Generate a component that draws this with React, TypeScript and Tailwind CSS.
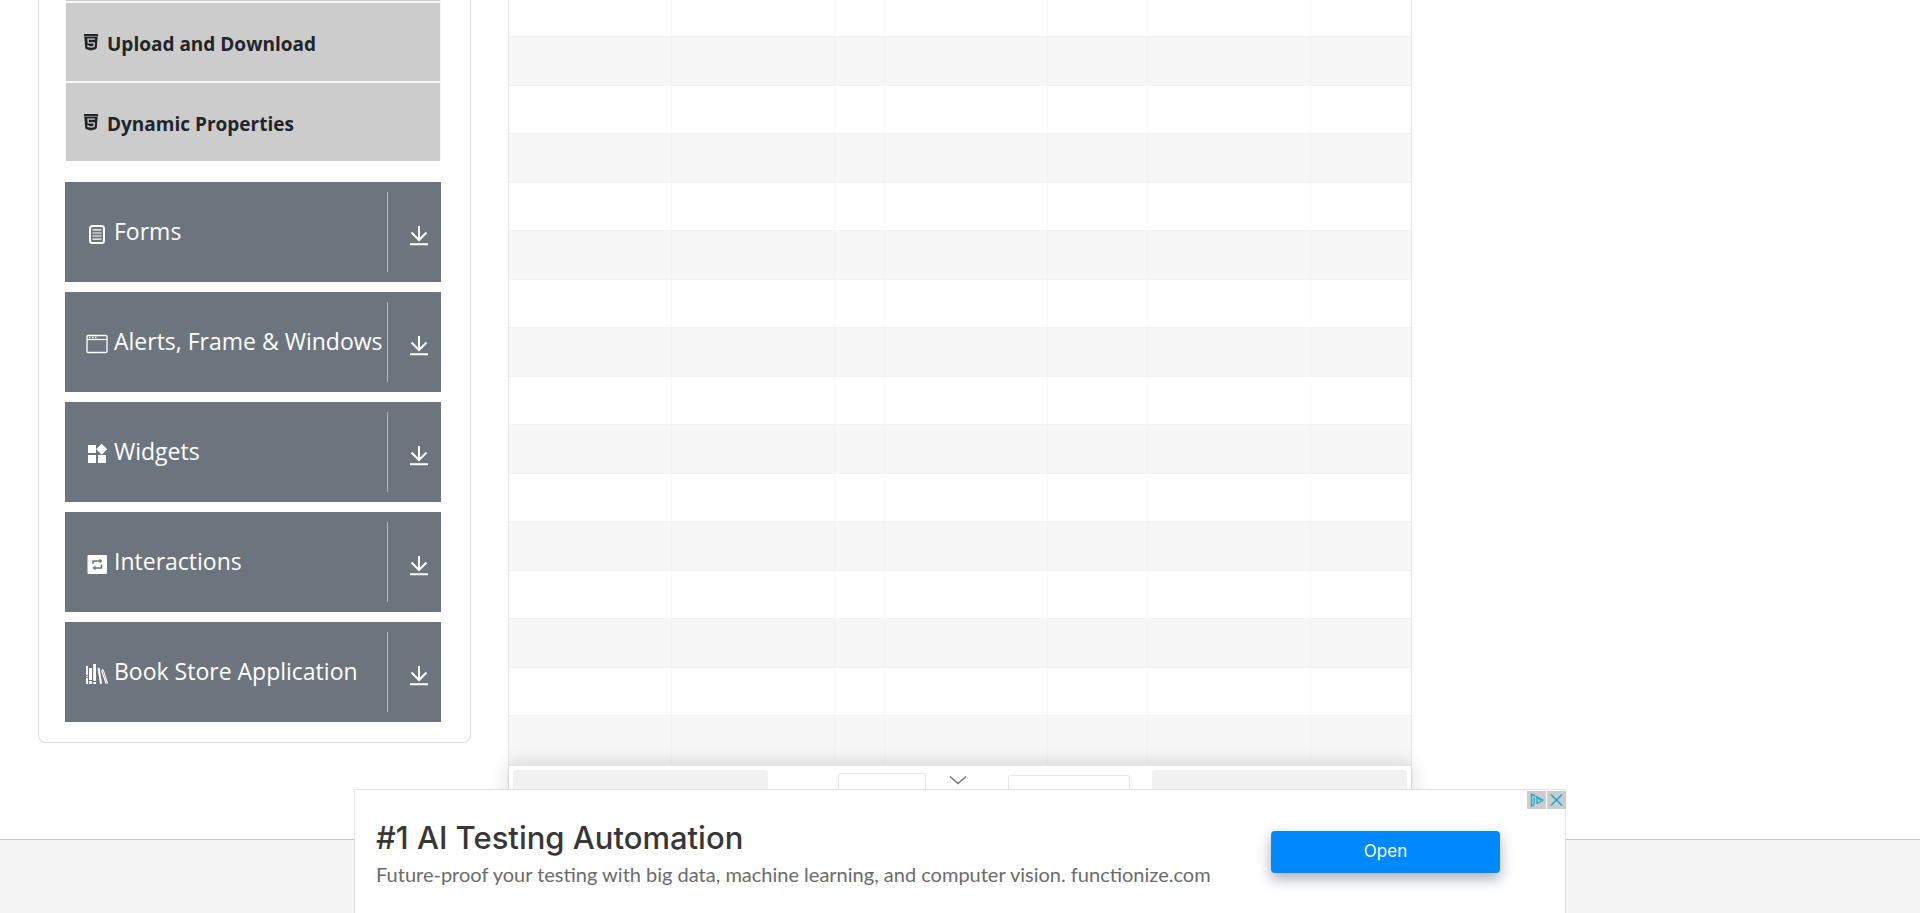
import React from 'react';

const HtmlIcon = () => (
  <svg viewBox="0 0 14 17" className="h-[17px] w-[14px] shrink-0" aria-hidden="true">
    <path fill="#212529" d="M0 0h14v2.4h-.3l-.9 11.4c-.1.8-.6 1.3-1.3 1.5L7 16.4l-4.500-1.100c-.7-.2-1.200-.7-1.300-1.500L.3 2.400H0z" />
    <path fill="none" stroke="#ccc" strokeWidth="1.3" d="M10.800 5.200H4l.3 3.700h6l-.3 3.500-3 .8-3-.8-.1-1.400" />
    <path fill="none" stroke="#ccc" strokeWidth=".6" d="M.5 2.400h13" />
  </svg>
);

const FormsIcon = () => (
  <svg viewBox="0 0 22 22" className="size-[22px]" aria-hidden="true" fill="none" stroke="#fff">
    <rect x="4" y="4" width="14" height="17" rx="2.500" strokeWidth="2" />
    <path strokeWidth="1.200" d="M6.500 7.900h9M6.500 11h9M6.500 14h9M6.500 17.100h9" />
  </svg>
);

const WindowIcon = () => (
  <svg viewBox="0 0 22 22" className="size-[22px]" aria-hidden="true" fill="none" stroke="#fff">
    <rect x="1" y="3.500" width="20" height="17" rx="1" strokeWidth="1.300" />
    <path strokeWidth="1.200" d="M1 7.500h20" />
    <path strokeWidth="1.500" d="M3 5.500h1.500M6 5.500h1.500M9 5.500h1.500" />
  </svg>
);

const WidgetsIcon = () => (
  <svg viewBox="0 0 22 22" className="size-[22px]" aria-hidden="true" fill="#fff">
    <path d="M2 3h8v8H2zM2 13h8v8H2zM12 13h8v8h-8zM15.700 1.800l5.500 5.500-5.500 5.500-5.500-5.500z" />
  </svg>
);

const InteractionsIcon = () => (
  <svg viewBox="0 0 22 22" className="size-[22px]" aria-hidden="true">
    <rect x="1.500" y="3" width="19.500" height="19" rx="1" fill="#fff" />
    <g fill="none" stroke="#6c757d" strokeWidth="1.500">
      <path d="M7 12V9h8M15.500 12.500v3.500H8" />
    </g>
    <path fill="#6c757d" d="M13.500 6.500l3 2.500-3 2.500zM9.500 13.500l-3 2.500 3 2.500z" />
  </svg>
);

const BooksIcon = () => (
  <svg viewBox="0 0 22 22" className="size-[22px]" aria-hidden="true" fill="#fff">
    <path d="M0 4h2v9H0zM0 14h2v1H0zM0 16h2v6H0zM3 6h3v12H3zM3 19h3v3H3zM7.200 2h2.800v17H7.200zM7.200 20h2.800v2H7.200z" />
    <path d="M11.500 6l2-.4L16 21.500l-2 .5z" />
    <path fill="none" stroke="#fff" strokeWidth="1.100" d="M15.500 8.500l4.700 13.200M17.200 7.800l4.400 13.700M15.500 8.500l1.700-.7" />
  </svg>
);

const DownloadIcon = () => (
  <svg viewBox="0 0 18 20" className="h-5 w-[18px]" aria-hidden="true" fill="none" stroke="#fff" strokeWidth="2">
    <path d="M9 0v13.500M1.500 6.500L9 14l7.500-7.500M0 18.200h18" />
  </svg>
);

const items = ['Upload and Download', 'Dynamic Properties'];

const groups = [
  { label: 'Forms', Icon: FormsIcon },
  { label: 'Alerts, Frame & Windows', Icon: WindowIcon },
  { label: 'Widgets', Icon: WidgetsIcon },
  { label: 'Interactions', Icon: InteractionsIcon },
  { label: 'Book Store Application', Icon: BooksIcon },
];

const columns = ['w-[163px]', 'w-[163px]', 'w-[50px]', 'w-[163px]', 'w-[100px]', 'w-[163px]', 'w-[100px]'];
const rows = Array.from({ length: 16 }, (_, i) => i);

function Sidebar() {
  return (
    <nav className="self-start rounded-b-lg border border-t-0 border-[#dcdcdc] pr-[29px] pb-5 pl-[26px]">
      <ul>
        <li className="h-[2px] border border-t-0 border-[#f8f8f8] bg-[#ccc]" />
        {items.map((item) => (
          <li key={item} className="h-20 border border-[#f8f8f8] bg-[#ccc]">
            <a href="#" className="flex h-full items-center gap-[9px] pl-[18px] text-[19px] font-bold text-[#212529]">
              <HtmlIcon />
              <span className="pt-1">{item}</span>
            </a>
          </li>
        ))}
      </ul>
      <div className="mt-5 flex flex-col gap-[10px]">
        {groups.map(({ label, Icon }) => (
          <button
            key={label}
            type="button"
            className="flex h-[100px] w-full items-center bg-[#6c757d] pl-[21px] text-left text-[23px] text-white"
          >
            <span className="pt-[2px]">
              <Icon />
            </span>
            <span className="flex-1 whitespace-nowrap pb-[2px] pl-[6px]">{label}</span>
            <span className="flex h-20 w-[54px] shrink-0 items-center justify-center border-l border-[#b8b8b8] pl-2 pt-[8px]">
              <DownloadIcon />
            </span>
          </button>
        ))}
      </div>
    </nav>
  );
}

function DataTable() {
  return (
    <section className="border-x border-[#e5e5e5]">
      <table className="w-full table-fixed border-separate border-spacing-0">
        <colgroup>
          {columns.map((width, i) => (
            <col key={i} className={width} />
          ))}
        </colgroup>
        <tbody>
          {rows.map((row) => (
            <tr key={row} className="odd:bg-white even:bg-[#f7f7f7]">
              {columns.map((_, i) => (
                <td
                  key={i}
                  className={`border-b border-r border-b-[#f2f2f2] border-r-black/[0.02] p-0 last:border-r-0 ${
                    row === 0 ? 'h-[37px]' : row === 15 ? 'h-[48px] border-b-0' : row % 2 ? 'h-[49px]' : 'h-[48px]'
                  }`}
                />
              ))}
            </tr>
          ))}
        </tbody>
      </table>
      <div className="relative grid h-12 grid-cols-[255fr_384fr_255fr] border-t-2 border-[#e5e5e5] bg-white p-1 shadow-[0_0_20px_rgba(0,0,0,0.16)]">
        <button type="button" disabled aria-label="Previous" className="rounded-[3px] bg-[#f1f1f1]" />
        <div className="flex items-start justify-between pl-[70px] pr-[22px]">
          <input
            type="number"
            aria-label="Page"
            className="mt-[3px] h-9 w-[88px] rounded-[3px] border border-black/10 bg-white"
          />
          <select
            aria-label="Rows per page"
            className="mt-[5px] h-8 w-[122px] appearance-none rounded-[3px] border border-black/10 bg-white"
          />
        </div>
        <button type="button" disabled aria-label="Next" className="rounded-[3px] bg-[#f1f1f1]" />
      </div>
    </section>
  );
}

function AdBanner() {
  return (
    <aside className="fixed bottom-0 left-1/2 z-20 flex h-[124px] w-[1212px] max-w-full -translate-x-1/2 items-start justify-between border border-b-0 border-[#e3e3e3] bg-white pl-[21px] pr-[65px] font-['Inter','Open_Sans',sans-serif]">
      <button type="button" aria-label="Collapse" className="absolute -top-[15px] left-[594px]">
        <svg viewBox="0 0 18 10" className="h-[10px] w-[18px]" fill="none" stroke="#757575" strokeWidth="1.500">
          <path d="M1 1.500l8 7 8-7" />
        </svg>
      </button>
      <div className="pt-7">
        <h2 className="text-[31px] leading-10 font-medium text-[#373737]">#1 AI Testing Automation</h2>
        <p className="font-['Lato',sans-serif] text-[20px] leading-8 text-[#6b6b6b]">
          Future-proof your testing with big data, machine learning, and computer vision. functionize.com
        </p>
      </div>
      <a
        href="#"
        className="mt-[41px] flex h-[42px] w-[229px] items-center justify-center rounded-[4px] bg-[#0088ff] text-[17px] text-white shadow-[0_6px_14px_rgba(40,50,80,0.4)]"
      >
        Open
      </a>
      <div className="absolute top-px -right-px flex gap-px">
        <button type="button" aria-label="Ad choices" className="flex h-[18px] w-[19px] items-center justify-center bg-[#ccc]">
          <svg viewBox="0 0 19 18" className="h-[18px] w-[19px]" fill="none" stroke="#1eaecb" strokeWidth="1.400" strokeLinejoin="round">
            <path d="M7 14l-2.500 1.200V3L16 9.200 10 12.500V6.500l4 2.500M7.200 6.500v7" />
          </svg>
        </button>
        <button type="button" aria-label="Close ad" className="flex h-[18px] w-[19px] items-center justify-center bg-[#ccc]">
          <svg viewBox="0 0 19 18" className="h-[18px] w-[19px]" fill="none" stroke="#1eaecb" strokeWidth="1.700">
            <path d="M4 3.500l11 11M15 3.500l-11 11" />
          </svg>
        </button>
      </div>
    </aside>
  );
}

export default function App() {
  return (
    <div className="flex min-h-screen flex-col bg-white font-['Open_Sans','Noto_Sans',sans-serif]">
      <main className="grid grid-cols-[433fr_904fr_433fr] gap-x-[37px] px-[38px] pb-[27px]">
        <Sidebar />
        <DataTable />
      </main>
      <footer className="flex-1 border-t border-[#c8c8c8] bg-[#f4f4f4]" />
      <AdBanner />
    </div>
  );
}
